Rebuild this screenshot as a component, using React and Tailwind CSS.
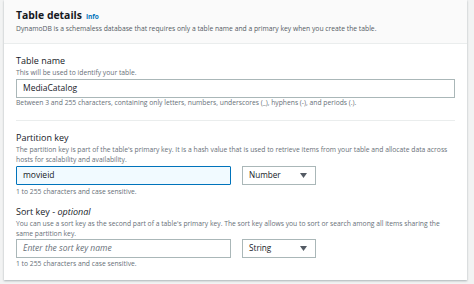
import React from "react";

const font = { fontFamily: '"Open Sans", "Noto Sans", sans-serif' };

function Caret() {
  return (
    <svg width="7" height="5" viewBox="0 0 7 5" className="shrink-0">
      <path d="M0 0 H7 L3.5 5 Z" fill="#545b64" />
    </svg>
  );
}

function Select({ value }) {
  return (
    <div className="flex h-[19px] w-[74px] items-center justify-between border border-[#aab7b8] bg-white pl-[6px] pr-[8px] text-[8.2px] text-[#16191f]">
      <span>{value}</span>
      <Caret />
    </div>
  );
}

export default function App() {
  return (
    <div className="h-[284px] w-[474px] overflow-hidden bg-[#f2f3f3]" style={font}>
      <div className="ml-[4px] w-[463px] bg-white pb-[10px] shadow-[0_1px_2px_rgba(0,28,36,0.3)]">
        <div className="h-[44px] border-b border-[#eaeded] bg-[#fafafa] px-[12px] pt-[7px]">
          <div className="flex items-baseline gap-[4px] leading-[16px]">
            <span className="text-[10.4px] font-bold text-[#16191f]">Table details</span>
            <span className="text-[6.5px] font-bold text-[#0073bb]">Info</span>
          </div>
          <div className="-mt-[1px] text-[6.75px] leading-[10px] text-[#545b64]">
            DynamoDB is a schemaless database that requires only a table name and a primary key when you create the table.
          </div>
        </div>
        <div className="px-[12px] pt-[10px]">
          <div className="text-[9px] leading-[14px] text-[#16191f]">Table name</div>
          <div className="text-[6.75px] leading-[9px] text-[#687078]">This will be used to identify your table.</div>
          <div className="mt-[2px] flex h-[19px] items-center border border-[#aab7b8] px-[6px] text-[8.5px] text-[#16191f]">
            MediaCatalog
          </div>
          <div className="text-[6.75px] leading-[10px] text-[#687078]">
            Between 3 and 255 characters, containing only letters, numbers, underscores (_), hyphens (-), and periods (.).
          </div>
          <div className="mt-[12px] border-t border-[#eaeded]" />
          <div className="pt-[10px] text-[9px] leading-[14px] text-[#16191f]">Partition key</div>
          <div className="text-[6.75px] leading-[9.5px] text-[#687078]">
            The partition key is part of the table's primary key. It is a hash value that is used to retrieve items from your table and allocate data across hosts for scalability and availability.
          </div>
          <div className="mt-[2px] flex items-center gap-[11px]">
            <div className="flex h-[19px] w-[215px] items-center rounded-[1px] border-[1.5px] border-[#0073bb] bg-[#f1faff] px-[6px] text-[8.5px] text-[#16191f]">
              movieid
            </div>
            <Select value="Number" />
          </div>
          <div className="text-[6.75px] leading-[14px] text-[#687078]">1 to 255 characters and case sensitive.</div>
          <div className="mt-[6px] text-[9px] leading-[14px] text-[#16191f]">
            Sort key - <span className="italic">optional</span>
          </div>
          <div className="text-[6.75px] leading-[9.5px] text-[#687078]">
            You can use a sort key as the second part of a table's primary key. The sort key allows you to sort or search among all items sharing the same partition key.
          </div>
          <div className="mt-[1px] flex items-center gap-[11px]">
            <div className="flex h-[19px] w-[215px] items-center border border-[#aab7b8] px-[6px] text-[8.5px] italic text-[#687078]">
              Enter the sort key name
            </div>
            <Select value="String" />
          </div>
          <div className="text-[6.75px] leading-[12px] text-[#687078]">1 to 255 characters and case sensitive.</div>
        </div>
      </div>
    </div>
  );
}
